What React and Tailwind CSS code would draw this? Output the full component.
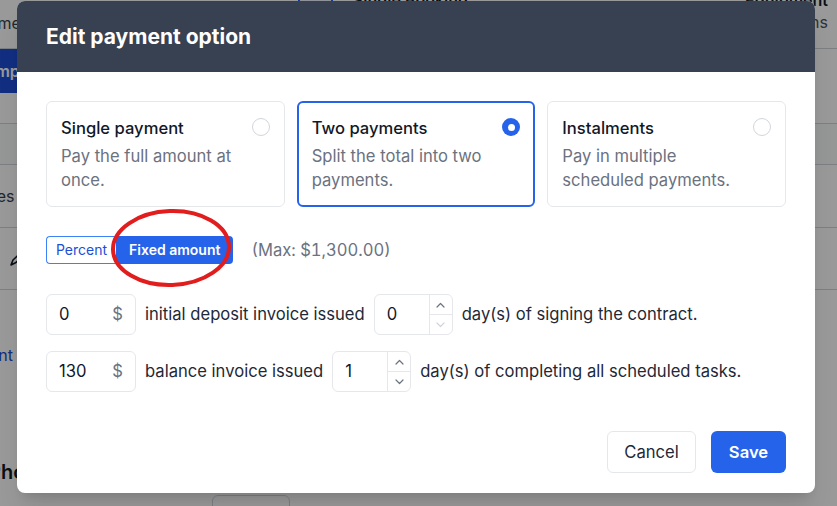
import React from "react";

const font = { fontFamily: "Inter, 'Noto Sans', sans-serif" };

function Radio({ checked }) {
  if (checked) {
    return (
      <span className="flex h-[18px] w-[18px] shrink-0 items-center justify-center rounded-full bg-[#2563eb]">
        <span className="block h-[7px] w-[7px] rounded-full bg-white" />
      </span>
    );
  }
  return <span className="block h-[18px] w-[18px] shrink-0 rounded-full border border-[#d1d5db] bg-white" />;
}

function OptionCard({ title, desc, checked }) {
  return (
    <div
      className={
        checked
          ? "flex items-start justify-between gap-3 rounded-md border-2 border-[#2563eb] px-[13px] pt-[13px] pb-[13px]"
          : "flex items-start justify-between gap-3 rounded-md border border-[#e5e7eb] px-[14px] pt-[14px] pb-[14px]"
      }
    >
      <div className="flex flex-col gap-1">
        <div className="text-[16.6px] leading-6 font-medium text-[#111827]">{title}</div>
        <div className="text-[16.6px] leading-6 text-[#6b7280]">{desc}</div>
      </div>
      <div className="shrink-0 pt-[2px]">
        <Radio checked={checked} />
      </div>
    </div>
  );
}

function Chevron({ up, muted }) {
  return (
    <svg width="9" height="6" viewBox="0 0 9 6" fill="none" className={muted ? "text-[#d1d5db]" : "text-[#6b7280]"}>
      <path d={up ? "M1 5 L4.5 1.5 L8 5" : "M1 1 L4.5 4.5 L8 1"} stroke="currentColor" strokeWidth="1.2" strokeLinecap="round" strokeLinejoin="round" />
    </svg>
  );
}

function MoneyInput({ value }) {
  return (
    <div className="flex h-[41px] w-[90px] shrink-0 items-center justify-between rounded-md border border-[#e5e7eb] pr-[12px] pl-[12px] text-[#111827]">
      <span>{value}</span>
      <span className="text-[#6b7280]">$</span>
    </div>
  );
}

function DayInput({ value, downMuted }) {
  return (
    <div className="flex h-[41px] w-[79px] shrink-0 items-stretch rounded-md border border-[#e5e7eb] text-[#111827]">
      <span className="flex flex-1 items-center pl-[12px]">{value}</span>
      <div className="flex w-[23px] flex-col border-l border-[#e5e7eb]">
        <span className="flex flex-1 items-center justify-center border-b border-[#e5e7eb]">
          <Chevron up />
        </span>
        <span className="flex flex-1 items-center justify-center">
          <Chevron muted={downMuted} />
        </span>
      </div>
    </div>
  );
}

function BackgroundPage() {
  return (
    <div className="flex h-[506px] w-[837px] flex-col overflow-hidden bg-white text-[#374151]">
      <div className="flex h-[49px] shrink-0 items-start justify-between border-b border-[#d1d5db]">
        <span className="ml-[-24px] pt-[11px] text-base">Home</span>
        <div className="flex items-start gap-5">
          <span className="mt-[-14px] h-[20px] w-[35px] rounded border-2 border-[#2563eb] bg-[#eff6ff]" />
          <span className="mt-[-12px] text-base font-semibold text-[#111827]">Single Booking</span>
        </div>
        <div className="mr-[9px] flex flex-col items-end leading-5">
          <span className="mt-[-12px] text-base font-semibold text-[#111827]">Equipment</span>
          <span className="mt-[-2px] text-base text-[#4b5563]">Options</span>
        </div>
      </div>
      <div className="flex h-[74px] shrink-0 items-start">
        <span className="ml-[-25px] flex h-[44px] items-center rounded-md bg-[#1d4ed8] px-4 text-base font-semibold text-white">Import</span>
      </div>
      <div className="h-[42px] shrink-0 border-y border-[#d1d5db] bg-[#f9fafb]" />
      <div className="flex h-[63px] shrink-0 items-center border-b border-[#d1d5db]">
        <span className="ml-[-30px] text-base">Notes</span>
      </div>
      <div className="flex h-[62px] shrink-0 items-center border-b border-[#d1d5db]">
        <svg width="16" height="16" viewBox="0 0 16 16" className="ml-[9px]" fill="none">
          <path d="M2 14 L4 9 L12 1.5 L14.5 4 L7 11.5 Z" stroke="#111827" strokeWidth="1.6" strokeLinejoin="round" />
        </svg>
      </div>
      <div className="flex h-[130px] shrink-0 items-center">
        <span className="ml-[-53px] text-base text-[#1d4ed8]">Payment</span>
      </div>
      <div className="flex shrink-0 flex-col pt-[38px]">
        <span className="ml-[-12px] text-xl leading-7 font-semibold text-[#111827]">Photos</span>
        <span className="mt-[9px] ml-[212px] h-[30px] w-[78px] rounded-md border border-[#d1d5db]" />
      </div>
    </div>
  );
}

export default function App() {
  return (
    <div className="relative h-[506px] w-[837px] overflow-hidden" style={font}>
      <BackgroundPage />
      <div className="absolute inset-0 bg-black/40">
        <div className="ml-[17px] mt-[1px] w-[798px] overflow-hidden rounded-lg bg-white shadow-xl">
          <div className="flex h-[71px] items-center bg-[#374151] px-[29px]">
            <h2 className="text-[21px] font-bold text-white">Edit payment option</h2>
          </div>
          <div className="px-[29px] pt-[29px] pb-[20px] text-[16.6px]">
            <div className="grid grid-cols-3 gap-3">
              <OptionCard title="Single payment" desc="Pay the full amount at once." />
              <OptionCard title="Two payments" desc="Split the total into two payments." checked />
              <OptionCard title="Instalments" desc="Pay in multiple scheduled payments." />
            </div>

            <div className="mt-[29px] flex h-[28px] items-center">
              <div className="flex h-[28px]">
                <button className="h-full rounded-l border border-r-0 border-[#3b82f6] bg-white px-[9px] text-sm text-[#1d4ed8]">Percent</button>
                <button className="h-full rounded-r bg-[#2563eb] px-[13px] text-sm font-semibold text-white">Fixed amount</button>
              </div>
              <span className="ml-[18px] text-[16.6px] text-[#6b7280] tabular-nums">(Max: $1,300.00)</span>
            </div>

            <div className="mt-[30px] flex flex-col gap-4">
              <div className="flex items-center gap-[9px] text-[#1f2937]">
                <MoneyInput value="0" />
                <span>initial deposit invoice issued</span>
                <DayInput value="0" downMuted />
                <span>day(s) of signing the contract.</span>
              </div>
              <div className="flex items-center gap-[9px] text-[#1f2937]">
                <MoneyInput value="130" />
                <span>balance invoice issued</span>
                <DayInput value="1" />
                <span>day(s) of completing all scheduled tasks.</span>
              </div>
            </div>

            <div className="mt-[39px] flex justify-end gap-[15px]">
              <button className="h-[42px] w-[89px] rounded-md border border-[#e5e7eb] bg-white text-[16.6px] text-[#1f2937]">Cancel</button>
              <button className="h-[42px] w-[75px] rounded-md bg-[#2563eb] text-[16.6px] font-semibold text-white">Save</button>
            </div>
          </div>
        </div>
      </div>
      <svg className="pointer-events-none absolute left-[105px] top-[204px]" width="132" height="88" viewBox="0 0 132 88" fill="none">
        <ellipse cx="66" cy="44" rx="58" ry="37" stroke="#e11d1d" strokeWidth="4" transform="rotate(-2 66 44)" />
      </svg>
    </div>
  );
}
